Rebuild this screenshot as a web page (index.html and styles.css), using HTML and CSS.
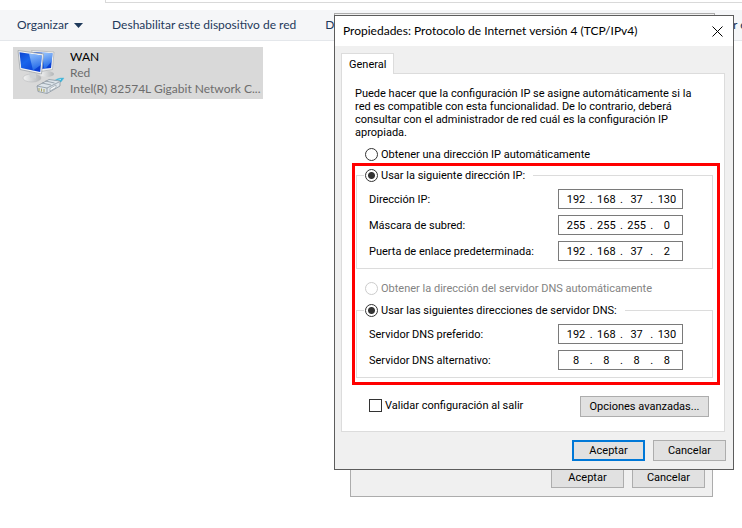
FILE: index.html
```html
<!DOCTYPE html>
<html lang="es">
<head>
<meta charset="utf-8">
<title>Conexiones de red</title>
<link rel="stylesheet" href="styles.css">
</head>
<body>
<main class="explorer">
  <div class="address-row"><div class="address-box"></div></div>
  <nav class="toolbar">
    <button type="button" class="tool">Organizar
      <svg class="caret" width="9" height="5" viewBox="0 0 9 5" aria-hidden="true"><path d="M0 0h9L4.500 5z" fill="#1e395b"/></svg>
    </button>
    <button type="button" class="tool">Deshabilitar este dispositivo de red</button>
    <button type="button" class="tool">Di</button>
    <button type="button" class="tool tool-last">r e</button>
  </nav>
  <section class="connections">
    <article class="connection">
      <svg class="connection-icon" width="48" height="48" viewBox="0 0 48 48" aria-hidden="true">
        <defs>
          <linearGradient id="screen" x1="0" y1="0" x2="0.800" y2="0.900">
            <stop offset="0" stop-color="#0b43d0"/><stop offset="0.450" stop-color="#1a66ec"/>
            <stop offset="1" stop-color="#0a3ed2"/>
          </linearGradient>
          <linearGradient id="glare" x1="0" y1="0" x2="0.200" y2="1">
            <stop offset="0" stop-color="#b9dcff"/><stop offset="1" stop-color="#2d78ee"/>
          </linearGradient>
          <linearGradient id="stand" x1="0" y1="0" x2="1" y2="0">
            <stop offset="0" stop-color="#f4f4f4"/><stop offset="1" stop-color="#b2b5b7"/>
          </linearGradient>
        </defs>
        <ellipse cx="30" cy="25" rx="7" ry="3" fill="url(#stand)"/>
        <path d="M14.500 1.500L37 3l-1.500 17.500-12 2z" fill="#f0f1f2" stroke="#adb1b4" stroke-width="0.700"/>
        <path d="M16 3l19.500 1.200L34 19l-10 1z" fill="url(#screen)"/>
        <path d="M25 3.500l10.500.7-.7 8L29 19h-2z" fill="url(#glare)" opacity="0.800"/>
        <ellipse cx="15" cy="29" rx="9" ry="4" fill="url(#stand)" stroke="#b4b7b9" stroke-width="0.500"/>
        <path d="M12 23l7 1.500v5l-6-1z" fill="#cfd2d4"/>
        <path d="M1 1.500L26.500 5l-2 20L3 20.500z" fill="#f3f4f5" stroke="#a0a5a9" stroke-width="0.800"/>
        <path d="M2.500 3.200l22.300 3.200L23.200 23 4.200 19z" fill="url(#screen)"/>
        <path d="M12 4.500l12.800 1.900L23.800 16 16 21.500z" fill="url(#glare)" opacity="0.750"/>
        <path d="M36 33q4-4.500 11-4l-3 4q-3-.5-6 2.500z" fill="#36b1d8" stroke="#5fbdd9" stroke-width="0.500"/>
        <path d="M38 32l6-1.500" stroke="#b2ecf8"/>
        <path d="M20 37l12-6.500 11 1.500v5l-13 7.500-9-2z" fill="#dde4ea" stroke="#7f8b96" stroke-width="0.700"/>
        <path d="M20 37l10 2 12-6M30 39v5M25 34l9 2M28.500 32l9 2" fill="none" stroke="#7f8b96" stroke-width="0.700"/>
        <path d="M22 39v3M24.500 39.500v3M27 40v3" stroke="#a9a35f"/>
        <path d="M33 39.500l6-3.500v2.500L33 42z" fill="#f8fafb" stroke="#8d98a2" stroke-width="0.600"/>
      </svg>
      <div class="connection-text">
        <strong>WAN</strong>
        <span>Red</span>
        <span>Intel(R) 82574L Gigabit Network C...</span>
      </div>
    </article>
  </section>
</main>

<div class="window status-window"></div>
<div class="window adapter-window">
  <div class="actions">
    <button type="button" class="button">Aceptar</button>
    <button type="button" class="button">Cancelar</button>
  </div>
</div>

<form class="window dialog">
  <header class="titlebar">
    <h1>Propiedades: Protocolo de Internet versión 4 (TCP/IPv4)</h1>
    <button type="button" class="close">
      <svg width="11" height="11" viewBox="0 0 11 11" aria-hidden="true"><path d="M.5.5l10 10M10.500.5l-10 10" stroke="#000" fill="none"/></svg>
    </button>
  </header>
  <div class="dialog-body">
    <button type="button" class="tab">General</button>
    <div class="panel">
      <p class="intro">Puede hacer que la configuración IP se asigne automáticamente si la<br>red es compatible con esta funcionalidad. De lo contrario, deberá<br>consultar con el administrador de red cuál es la configuración IP<br>apropiada.</p>
      <label class="choice"><input type="radio" name="ip">Obtener una dirección IP automáticamente</label>
      <div class="highlight">
        <fieldset class="group">
          <legend><label class="choice"><input type="radio" name="ip" checked>Usar la siguiente dirección IP:</label></legend>
          <div class="row">
            <label id="l-ip" for="ip-1">Dirección IP:</label>
            <div class="address" role="group" aria-labelledby="l-ip"><input id="ip-1" value="192">.<input aria-labelledby="l-ip" value="168">.<input aria-labelledby="l-ip" value="37">.<input aria-labelledby="l-ip" value="130"></div>
          </div>
          <div class="row">
            <label id="l-mask" for="mask-1">Máscara de subred:</label>
            <div class="address" role="group" aria-labelledby="l-mask"><input id="mask-1" value="255">.<input aria-labelledby="l-mask" value="255">.<input aria-labelledby="l-mask" value="255">.<input aria-labelledby="l-mask" value="0"></div>
          </div>
          <div class="row">
            <label id="l-gate" for="gate-1">Puerta de enlace predeterminada:</label>
            <div class="address" role="group" aria-labelledby="l-gate"><input id="gate-1" value="192">.<input aria-labelledby="l-gate" value="168">.<input aria-labelledby="l-gate" value="37">.<input aria-labelledby="l-gate" value="2"></div>
          </div>
        </fieldset>
        <label class="choice choice-off"><input type="radio" name="dns" disabled>Obtener la dirección del servidor DNS automáticamente</label>
        <fieldset class="group">
          <legend><label class="choice"><input type="radio" name="dns" checked>Usar las siguientes direcciones de servidor DNS:</label></legend>
          <div class="row">
            <label id="l-dns" for="dns-1">Servidor DNS preferido:</label>
            <div class="address" role="group" aria-labelledby="l-dns"><input id="dns-1" value="192">.<input aria-labelledby="l-dns" value="168">.<input aria-labelledby="l-dns" value="37">.<input aria-labelledby="l-dns" value="130"></div>
          </div>
          <div class="row">
            <label id="l-alt" for="alt-1">Servidor DNS alternativo:</label>
            <div class="address" role="group" aria-labelledby="l-alt"><input id="alt-1" value="8">.<input aria-labelledby="l-alt" value="8">.<input aria-labelledby="l-alt" value="8">.<input aria-labelledby="l-alt" value="8"></div>
          </div>
        </fieldset>
      </div>
      <div class="options">
        <label class="check"><input type="checkbox">Validar configuración al salir</label>
        <button type="button" class="button button-wide">Opciones avanzadas...</button>
      </div>
    </div>
    <div class="actions">
      <button type="submit" class="button button-default">Aceptar</button>
      <button type="button" class="button">Cancelar</button>
    </div>
  </div>
</form>
</body>
</html>
```
FILE: styles.css
```css
* { box-sizing: border-box; }

body {
  margin: 0;
  min-height: 100vh;
  overflow: hidden;
  background: #fff;
  color: #000;
  font: 11px/15px Roboto, "Liberation Sans", sans-serif;
}

button, input { font: inherit; color: inherit; margin: 0; }

/* Explorer window behind the dialogs */
.explorer, .titlebar { font: 12px/16px Lato, "Liberation Sans", sans-serif; }

.address-row { height: 10px; padding-left: 105px; }
.address-box { height: 3px; border: solid #d9d9d9; border-width: 0 0 1px 1px; }

.toolbar {
  display: flex;
  align-items: center;
  gap: 29px;
  height: 31px;
  padding-left: 17px;
  background: #f5f6f8;
  border-bottom: 1px solid #e4e7eb;
  white-space: nowrap;
}
.tool { flex: none; padding: 0; border: 0; background: none; color: #1e395b; }
.tool-last { width: 9px; margin-left: auto; overflow: hidden; text-align: left; }
.caret { margin-left: 3px; vertical-align: middle; }

.connections { padding: 6px 13px; }
.connection {
  display: flex;
  gap: 5px;
  width: 250px;
  height: 52px;
  padding: 2px 4px;
  background: #d9d9d9;
}
.connection-icon { flex: none; }
.connection-text { display: flex; flex-direction: column; color: #6d6d6d; white-space: nowrap; }
.connection-text strong { color: #000; font-weight: 400; }

/* Stacked windows */
.window { position: absolute; background: #f0f0f0; border: 1px solid #acacac; }
.status-window { left: 334px; top: 13px; width: 381px; height: 40px; }
.adapter-window { left: 350px; top: 40px; width: 363px; padding: 426px 7px 8px; }
.dialog {
  left: 334px;
  top: 15px;
  width: 400px;
  border-color: #5c5c5c;
}

.titlebar {
  display: flex;
  align-items: center;
  justify-content: space-between;
  height: 30px;
  padding: 0 10px 0 8px;
  background: #fff;
}
.titlebar h1 { margin: 0; font: inherit; white-space: nowrap; }
.close { display: flex; padding: 0; border: 0; background: none; }

.dialog-body { padding: 7px 8px 8px 6px; }

.tab {
  display: block;
  position: relative;
  height: 21px;
  margin-bottom: -1px;
  padding: 0 7px;
  border: 1px solid #dcdcdc;
  border-bottom: 0;
  background: #fff;
}
.panel { padding: 13px 4px 14px 10px; border: 1px solid #dcdcdc; background: #fff; }
.intro { margin: 0 0 8px; padding-left: 3px; line-height: 13px; white-space: nowrap; }

.choice, .check { display: flex; align-items: center; gap: 3px; height: 14px; white-space: nowrap; }
.panel > .choice { margin: 0 0 2px 13px; }

input[type="radio"], input[type="checkbox"] {
  appearance: none;
  flex: none;
  width: 13px;
  height: 13px;
  border: 1px solid #333;
  background: #fff;
}
input[type="radio"] { border-radius: 50%; }
input[type="radio"]:checked { background: radial-gradient(circle, #333 0 3px, #fff 4px); }
input[type="radio"]:disabled { border-color: #ccc; }

.highlight { padding: 2px 4px 4px 1px; border: 3px solid #f00; }
.highlight > .choice { margin: 12px 0 8px 9px; }
.choice-off { color: #838383; }

.group {
  display: flex;
  flex-direction: column;
  gap: 6px;
  min-width: 0;
  margin: 0;
  padding: 7px 29px 7px 12px;
  border: 1px solid #dcdcdc;
}
.group legend { margin-left: -5px; padding: 0 8px 0 1px; }
.row { display: flex; align-items: center; justify-content: space-between; height: 20px; }
.address {
  display: flex;
  align-items: center;
  justify-content: space-between;
  width: 125px;
  height: 20px;
  padding: 0 2px 0 4px;
  border: 1px solid #7a7a7a;
}
.address input { width: 26px; padding: 0; border: 0; background: none; text-align: center; }

.options { display: flex; justify-content: space-between; margin-top: 11px; padding: 0 11px 0 17px; }
.check { height: 18px; }

.actions { display: flex; justify-content: flex-end; gap: 8px; }
.dialog .actions { margin: 8px -1px 0 0; }
.button {
  width: 73px;
  height: 21px;
  padding: 0;
  border: 1px solid #adadad;
  background: #e1e1e1;
  white-space: nowrap;
}
.button-wide { width: 129px; }
.button-default { border: 2px solid #0078d7; }
```
